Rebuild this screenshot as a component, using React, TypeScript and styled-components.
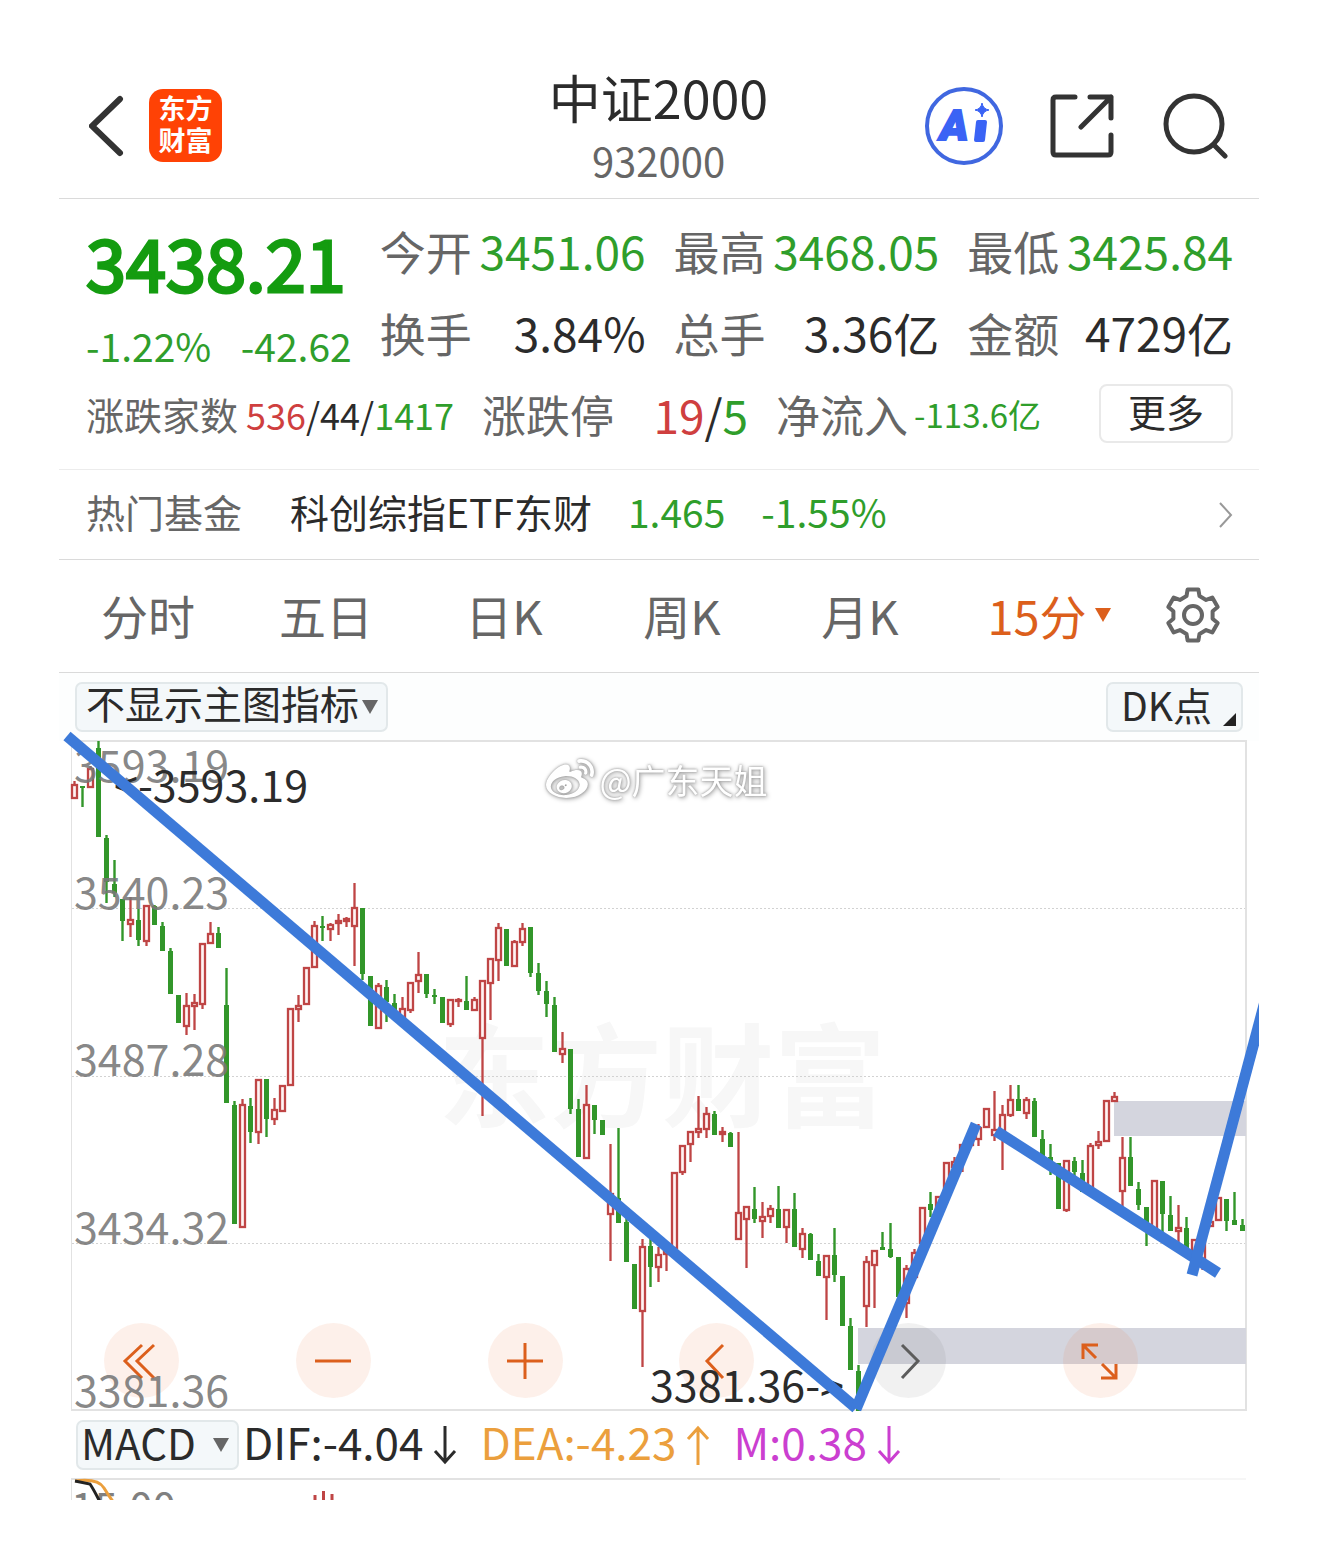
import React from "react";
import styled, { createGlobalStyle } from "styled-components";
import { FaWeibo } from "react-icons/fa";

const GlobalStyle = createGlobalStyle`
  *, *::before, *::after { box-sizing: border-box; }
  body {
    margin: 0;
    background: #fff;
    color: #2b2b2b;
    font-family: "Noto Sans CJK SC", "Noto Sans", sans-serif;
    font-weight: 400;
  }
  button, select { font: inherit; color: inherit; }
`;

const color = {
  ink: "#2b2b2b",
  label: "#666",
  green: "#2f9e2b",
  strongGreen: "#149c10",
  red: "#cf3f3f",
  orange: "#dc5f1c",
  gold: "#eb9f3d",
  purple: "#cb3fd0",
  line: "#dadada",
  trend: "#3d7ad9",
  candleUp: "#bf4545",
  candleDown: "#32962a",
  zone: "#d4d5de",
};

type Tone = "ink" | "green" | "red" | "gold" | "purple";

const Page = styled.div`
  padding: 59px;
`;

const Panel = styled.main`
  overflow: hidden;
`;

/* ---------- header ---------- */

const Header = styled.header`
  display: grid;
  grid-template-columns: 1fr auto 1fr;
  align-items: center;
  height: 140px;
  padding: 0 31px 6px 30px;
  border-bottom: 1px solid ${color.line};
`;

const HeaderSide = styled.div<{ $end?: boolean; $gap: number }>`
  display: flex;
  align-items: center;
  justify-content: ${(p) => (p.$end ? "flex-end" : "flex-start")};
  gap: ${(p) => p.$gap}px;
`;

const IconButton = styled.button`
  display: block;
  padding: 0;
  border: 0;
  background: none;
  cursor: pointer;
  svg { display: block; }
`;

const Logo = styled.div`
  display: flex;
  flex-direction: column;
  align-items: center;
  width: 73px;
  height: 73px;
  padding-top: 3px;
  border-radius: 14px;
  background: #ff4205;
  color: #fff;
  font-size: 27px;
  font-weight: 700;
  line-height: 32px;
`;

const TitleBlock = styled.div`
  padding-top: 3px;
  text-align: center;
`;

const Title = styled.h1`
  margin: 0 0 3px;
  font-size: 52px;
  font-weight: 400;
  line-height: 62px;
`;

const Code = styled.div`
  color: ${color.label};
  font-size: 40px;
  line-height: 58px;
`;

/* ---------- quote ---------- */

const Quote = styled.section`
  padding: 23px 26px 26px 27px;
  border-bottom: 1px solid #ececec;
`;

const QuoteGrid = styled.div`
  display: grid;
  grid-template-columns: repeat(4, minmax(0, 1fr));
  grid-template-rows: 56px 56px;
  gap: 26px 28px;
`;

const Price = styled.div`
  grid-row: 1 / 3;
  padding-top: 3px;
  white-space: nowrap;
`;

const Last = styled.strong`
  display: block;
  color: ${color.strongGreen};
  font-size: 72px;
  font-weight: 400;
  line-height: 72px;
  -webkit-text-stroke: 3px ${color.strongGreen};
`;

const Change = styled.div`
  display: flex;
  justify-content: space-between;
  margin-top: 24px;
  color: ${color.green};
  font-size: 39px;
  line-height: 48px;
`;

const Stat = styled.div`
  display: flex;
  align-items: baseline;
  justify-content: space-between;
  font-size: 46px;
  line-height: 56px;
  white-space: nowrap;
`;

const Breadth = styled(Stat)<{ $size: number; $width?: number; $gap?: number }>`
  align-items: center;
  gap: ${(p) => p.$gap ?? 0}px;
  width: ${(p) => (p.$width ? `${p.$width}px` : "auto")};
  font-size: ${(p) => p.$size}px;
`;

const Label = styled.span`
  color: ${color.label};
`;

const Value = styled.span<{ $tone?: Tone; $size?: number }>`
  color: ${(p) => color[p.$tone ?? "ink"]};
  ${(p) => (p.$size ? `font-size: ${p.$size}px;` : "")}
`;

const BreadthRow = styled.div`
  display: flex;
  align-items: center;
  gap: 28px;
  margin-top: 24px;
`;

const MoreButton = styled.button`
  width: 134px;
  height: 59px;
  margin-left: auto;
  padding: 0 0 6px;
  border: 2px solid #e9e9e9;
  border-radius: 8px;
  background: #fff;
  font-size: 38px;
  line-height: 48px;
  cursor: pointer;
`;

/* ---------- fund link ---------- */

const FundRow = styled.a`
  display: flex;
  align-items: center;
  gap: 36px;
  height: 90px;
  padding: 0 26px 0 27px;
  border-bottom: 1px solid ${color.line};
  color: ${color.ink};
  font-size: 39px;
  line-height: 56px;
  text-decoration: none;
  white-space: nowrap;
  > span { padding-bottom: 7px; }
`;

const FundLabel = styled(Label)`
  margin-right: 12px;
`;

const Chevron = styled.svg`
  margin-left: auto;
`;

/* ---------- period tabs ---------- */

const Tabs = styled.nav`
  display: grid;
  grid-template-columns: repeat(5, 178fr) 200fr 88fr;
  align-items: center;
  height: 113px;
  padding-right: 22px;
  border-bottom: 1px solid ${color.line};
`;

const Tab = styled.button<{ $active?: boolean }>`
  display: flex;
  align-items: center;
  justify-content: center;
  gap: 8px;
  padding: 0 0 2px;
  border: 0;
  background: none;
  color: ${(p) => (p.$active ? color.orange : color.label)};
  font-size: 47px;
  line-height: 64px;
  white-space: nowrap;
  cursor: pointer;
`;

/* ---------- chart ---------- */

const Toolbar = styled.div`
  display: flex;
  align-items: center;
  justify-content: space-between;
  height: 68px;
  padding: 0 16px;
  background: #fdfefe;
`;

const pill = `
  height: 50px;
  border: 2px solid #e2e8ea;
  border-radius: 7px;
  background: #f4f8fa;
  color: ${color.ink};
  cursor: pointer;
`;

const PillWrap = styled.label`
  ${pill}
  position: relative;
  display: block;
  svg {
    position: absolute;
    right: 8px;
    top: 16px;
    pointer-events: none;
  }
`;

const PillSelect = styled.select<{ $width: number; $size: number; $pad: number }>`
  appearance: none;
  display: block;
  width: ${(p) => p.$width}px;
  height: 58px;
  margin-top: -11px;
  padding: 0 0 0 ${(p) => p.$pad}px;
  border: 0;
  background: transparent;
  font-size: ${(p) => p.$size}px;
`;

const PillButton = styled.button`
  ${pill}
  display: flex;
  align-items: flex-end;
  gap: 11px;
  padding: 0 5px 4px 13px;
  font-size: 39px;
  line-height: 44px;
`;

const ChartArea = styled.div`
  position: relative;
`;

const ChartSvg = styled.svg<{ $clip?: boolean }>`
  display: block;
  width: 100%;
  overflow: ${(p) => (p.$clip ? "hidden" : "visible")};
`;

const OverlaySvg = styled(ChartSvg)`
  position: absolute;
  inset: 0;
  pointer-events: none;
`;

const Controls = styled.div`
  position: absolute;
  left: 0;
  right: 0;
  bottom: 13px;
  display: flex;
  justify-content: space-between;
  padding: 0 121px 0 45px;
`;

const RoundButton = styled.button<{ $muted?: boolean }>`
  width: 75px;
  height: 75px;
  padding: 0;
  border: 0;
  border-radius: 50%;
  background: ${(p) => (p.$muted ? "rgba(60, 60, 60, 0.07)" : "rgba(232, 110, 50, 0.1)")};
  color: ${(p) => (p.$muted ? "#5c5c5c" : color.orange)};
  cursor: pointer;
  svg { display: block; margin: 0 auto; }
`;

const Signature = styled.div`
  position: absolute;
  top: 14px;
  left: 0;
  right: 0;
  display: flex;
  align-items: center;
  justify-content: center;
  gap: 5px;
  padding-right: 4px;
  color: #fff;
  font-size: 34px;
  line-height: 50px;
  filter: drop-shadow(0 0 1px #999) drop-shadow(1px 1px 2px #aaa);
`;

const MacdBar = styled.div`
  display: flex;
  align-items: center;
  height: 67px;
  padding-left: 17px;
  white-space: nowrap;
`;

const Reading = styled.span<{ $tone: Tone }>`
  display: flex;
  align-items: center;
  gap: 10px;
  margin: 0 19px 0 4px;
  padding-bottom: 7px;
  color: ${(p) => color[p.$tone]};
  font-size: 44px;
  line-height: 56px;
  svg { margin-top: 7px; }
`;

/* Each bar: high, body top, body bottom, low, and whether it closed up. */
type Candle = [number, number, number, number, 0 | 1];

const candles: Candle[] = [
  [781, 784, 798, 799, 1], [786, 786, 788, 807, 0], [766, 768, 787, 787, 1], [741, 748, 837, 837, 0],
  [835, 838, 882, 903, 0], [860, 884, 893, 897, 0], [899, 899, 921, 941, 0], [897, 919, 924, 937, 1],
  [909, 920, 940, 946, 0], [905, 905, 941, 946, 1], [905, 906, 925, 925, 0], [922, 926, 951, 951, 0],
  [948, 951, 994, 994, 0], [995, 995, 1023, 1023, 0], [993, 1005, 1026, 1035, 1], [994, 1002, 1006, 1030, 1],
  [943, 943, 1004, 1009, 1], [922, 933, 943, 943, 1], [927, 933, 948, 948, 0], [968, 1005, 1103, 1103, 0],
  [1101, 1105, 1224, 1224, 0], [1099, 1104, 1227, 1227, 1], [1098, 1106, 1132, 1143, 0], [1079, 1079, 1132, 1144, 1],
  [1079, 1079, 1119, 1137, 0], [1098, 1109, 1119, 1125, 1], [1085, 1085, 1111, 1111, 1], [1008, 1008, 1085, 1085, 1],
  [995, 1005, 1009, 1022, 1], [967, 967, 1004, 1004, 1], [921, 925, 967, 967, 1], [916, 926, 928, 941, 0],
  [923, 924, 929, 941, 1], [914, 920, 923, 935, 1], [917, 918, 921, 927, 1], [883, 907, 926, 966, 1],
  [908, 908, 974, 980, 0], [976, 976, 1026, 1026, 0], [983, 985, 1028, 1028, 1], [980, 987, 1002, 1022, 0],
  [994, 1003, 1012, 1014, 0], [997, 1008, 1017, 1017, 1], [982, 982, 1010, 1013, 1], [952, 974, 981, 993, 1],
  [974, 974, 994, 998, 0], [989, 995, 997, 1004, 0], [997, 997, 1023, 1023, 0], [999, 999, 1024, 1027, 1],
  [998, 999, 1000, 1007, 1], [976, 1001, 1010, 1010, 0], [997, 999, 1010, 1010, 1], [980, 980, 1038, 1116, 1],
  [958, 958, 983, 1020, 1], [923, 927, 960, 981, 1], [929, 929, 966, 966, 0], [940, 941, 966, 966, 1],
  [923, 928, 942, 946, 1], [927, 927, 973, 977, 0], [963, 973, 991, 995, 0], [981, 991, 1004, 1017, 0],
  [997, 1005, 1052, 1052, 0], [1032, 1048, 1054, 1063, 1], [1049, 1049, 1109, 1114, 0], [1099, 1109, 1157, 1157, 0],
  [1085, 1104, 1158, 1158, 1], [1105, 1105, 1120, 1134, 0], [1120, 1120, 1135, 1135, 0], [1144, 1193, 1214, 1261, 1],
  [1128, 1198, 1223, 1223, 0], [1213, 1222, 1262, 1262, 0], [1264, 1264, 1309, 1309, 0], [1239, 1246, 1311, 1367, 1],
  [1239, 1246, 1267, 1287, 0], [1247, 1254, 1267, 1282, 1], [1243, 1247, 1254, 1271, 1], [1172, 1172, 1248, 1248, 1],
  [1145, 1145, 1172, 1175, 1], [1131, 1131, 1144, 1162, 1], [1096, 1128, 1132, 1138, 1], [1107, 1113, 1129, 1138, 1],
  [1111, 1114, 1135, 1135, 0], [1127, 1131, 1134, 1142, 1], [1132, 1133, 1147, 1147, 0], [1132, 1212, 1239, 1239, 1],
  [1206, 1206, 1219, 1268, 1], [1187, 1209, 1219, 1223, 0], [1202, 1216, 1221, 1238, 1], [1205, 1208, 1216, 1223, 1],
  [1186, 1209, 1228, 1228, 0], [1209, 1209, 1227, 1243, 1], [1193, 1209, 1247, 1247, 0], [1228, 1233, 1249, 1258, 1],
  [1233, 1234, 1260, 1260, 0], [1254, 1261, 1276, 1276, 0], [1255, 1255, 1277, 1320, 1], [1228, 1255, 1275, 1282, 0],
  [1276, 1276, 1326, 1326, 0], [1318, 1326, 1370, 1370, 0], [1365, 1371, 1411, 1411, 0], [1256, 1261, 1306, 1327, 1],
  [1250, 1250, 1265, 1308, 1], [1232, 1247, 1250, 1250, 0], [1223, 1249, 1257, 1258, 0], [1257, 1257, 1297, 1297, 0],
  [1265, 1268, 1303, 1318, 1], [1249, 1252, 1277, 1277, 1], [1207, 1207, 1243, 1243, 1], [1192, 1204, 1210, 1217, 0],
  [1196, 1196, 1213, 1213, 1], [1162, 1162, 1190, 1190, 1], [1157, 1161, 1167, 1167, 1], [1144, 1144, 1157, 1172, 1],
  [1135, 1135, 1145, 1145, 1], [1124, 1127, 1139, 1146, 1], [1108, 1108, 1127, 1127, 1], [1091, 1129, 1135, 1141, 1],
  [1105, 1114, 1133, 1170, 1], [1085, 1099, 1115, 1117, 1], [1085, 1099, 1111, 1111, 0], [1097, 1099, 1113, 1119, 1],
  [1098, 1101, 1137, 1137, 0], [1130, 1139, 1157, 1157, 0], [1144, 1157, 1167, 1175, 0], [1163, 1163, 1209, 1209, 0],
  [1160, 1160, 1210, 1212, 1], [1157, 1161, 1172, 1177, 0], [1160, 1173, 1192, 1192, 0], [1143, 1145, 1190, 1190, 1],
  [1131, 1141, 1145, 1149, 1], [1100, 1100, 1141, 1141, 1], [1092, 1096, 1101, 1101, 1], [1137, 1157, 1191, 1207, 1],
  [1137, 1157, 1186, 1186, 0], [1182, 1189, 1205, 1210, 0], [1207, 1207, 1227, 1246, 0], [1180, 1180, 1230, 1230, 1],
  [1181, 1181, 1214, 1233, 0], [1196, 1215, 1231, 1231, 0], [1205, 1227, 1231, 1243, 1], [1217, 1228, 1250, 1250, 0],
  [1239, 1239, 1253, 1253, 1], [1225, 1230, 1260, 1270, 1], [1218, 1221, 1226, 1226, 1], [1197, 1197, 1220, 1220, 1],
  [1199, 1199, 1221, 1231, 0], [1192, 1220, 1225, 1225, 0], [1219, 1225, 1231, 1231, 0],
];

const FIRST_X = 74.5;
const STEP = 8;
const CHART_VIEW = "59 741 1200 670";

const priceLabels = [
  { text: "3593.19", y: 782 },
  { text: "3540.23", y: 909 },
  { text: "3487.28", y: 1076 },
  { text: "3434.32", y: 1244 },
  { text: "3381.36", y: 1407 },
];

function CandleMark({ data, x }: { data: Candle; x: number }) {
  const [high, top, bottom, low, up] = data;
  if (up) {
    return (
      <g stroke={color.candleUp} strokeWidth={2.3} fill="none">
        <path d={`M${x} ${high}V${top}M${x} ${bottom}V${low}`} />
        <rect x={x - 2.5} y={top + 1} width={5} height={Math.max(bottom - top - 1, 1)} fill="#fff4f4" />
      </g>
    );
  }
  return (
    <g fill={color.candleDown}>
      <rect x={x - 1.2} y={high} width={2.4} height={low - high} />
      <rect x={x - 2.5} y={top} width={5} height={bottom - top} />
    </g>
  );
}

/* Six-toothed cog outline around the centre of a 60 unit box. */
function gearPath() {
  const corners: [number, number][] = [[20, -19], [26, -12], [26, 12], [20, 19]];
  const points: string[] = [];
  for (let tooth = 0; tooth < 6; tooth++) {
    for (const [radius, offset] of corners) {
      const angle = ((tooth * 60 - 90 + offset) * Math.PI) / 180;
      points.push(`${(30 + radius * Math.cos(angle)).toFixed(1)} ${(30 + radius * Math.sin(angle)).toFixed(1)}`);
    }
  }
  return `M${points.join("L")}Z`;
}

function Caret({ size = 16, fill = "#666" }: { size?: number; fill?: string }) {
  return (
    <svg width={size} height={size - 2} viewBox="0 0 16 14" aria-hidden="true">
      <path d="M0 0H16L8 14Z" fill={fill} />
    </svg>
  );
}

function Arrow({ up }: { up?: boolean }) {
  return (
    <svg width="24" height="40" viewBox="0 0 24 40" fill="none" stroke="currentColor" strokeWidth="3" aria-hidden="true">
      <path d={up ? "M12 40V3M2 14L12 3L22 14" : "M12 1V37M2 26L12 37L22 26"} />
    </svg>
  );
}

function ControlIcon({ d }: { d: string }) {
  return (
    <svg width="44" height="44" viewBox="0 0 44 44" fill="none" stroke="currentColor" strokeWidth="3" aria-hidden="true">
      <path d={d} />
    </svg>
  );
}

const controls = [
  { name: "最早", d: "M22 6L5 22L22 39M34 6L17 22L34 39" },
  { name: "缩小", d: "M4 22H40" },
  { name: "放大", d: "M4 22H40M22 4V40" },
  { name: "向左", d: "M28 6L12 22L28 39" },
  { name: "向右", d: "M15 6L31 22L15 39", muted: true },
  { name: "全屏", d: "M20 6H5V20M5 6L18 19M23 39H38V25M38 39L24 25" },
];

export default function App() {
  return (
    <Page>
      <GlobalStyle />
      <Panel>
        <Header>
          <HeaderSide $gap={25}>
            <IconButton aria-label="返回">
              <svg width="35" height="64" viewBox="0 0 35 64" fill="none" stroke="#333" strokeWidth="6" strokeLinecap="round">
                <path d="M31 5L3 32L31 59" />
              </svg>
            </IconButton>
            <Logo>
              <span>东方</span>
              <span>财富</span>
            </Logo>
          </HeaderSide>
          <TitleBlock>
            <Title>中证2000</Title>
            <Code>932000</Code>
          </TitleBlock>
          <HeaderSide $end $gap={46}>
            <IconButton aria-label="智能助手">
              <svg width="80" height="80" viewBox="0 0 80 80">
                <circle cx="40" cy="40" r="37" fill="#fff" stroke="#4067e0" strokeWidth="4" />
                <text x="16" y="54" fill="#3a63f5" stroke="#3a63f5" strokeWidth="2" fontFamily="Roboto, sans-serif" fontSize="43" fontWeight="900" fontStyle="italic">
                  A
                </text>
                <path d="M52 36Q52 34 54 34H61Q63 34 63 36L61 54Q61 56 59 56H52Q50 56 50 54Z" fill="#3a63f5" />
                <path d="M58 17Q59 23 65 24Q59 25 58 31Q57 25 51 24Q57 23 58 17Z" fill="#3a63f5" stroke="#3a63f5" />
              </svg>
            </IconButton>
            <IconButton aria-label="分享">
              <svg width="64" height="64" viewBox="0 0 64 64" fill="none" stroke="#333" strokeWidth="5" strokeLinecap="round" strokeLinejoin="round">
                <path d="M25 3H6Q3 3 3 6V58Q3 61 6 61H58Q61 61 61 58V41M40 3H61V24M61 3L31 33" />
              </svg>
            </IconButton>
            <IconButton aria-label="搜索">
              <svg width="68" height="68" viewBox="0 0 68 68" fill="none" stroke="#333" strokeWidth="5" strokeLinecap="round">
                <circle cx="34" cy="32" r="28" />
                <path d="M54 53L65 64" />
              </svg>
            </IconButton>
          </HeaderSide>
        </Header>

        <Quote>
          <QuoteGrid>
            <Price>
              <Last>3438.21</Last>
              <Change>
                <span>-1.22%</span>
                <span>-42.62</span>
              </Change>
            </Price>
            <Stat><Label>今开</Label><Value $tone="green">3451.06</Value></Stat>
            <Stat><Label>最高</Label><Value $tone="green">3468.05</Value></Stat>
            <Stat><Label>最低</Label><Value $tone="green">3425.84</Value></Stat>
            <Stat><Label>换手</Label><Value>3.84%</Value></Stat>
            <Stat><Label>总手</Label><Value>3.36亿</Value></Stat>
            <Stat><Label>金额</Label><Value>4729亿</Value></Stat>
          </QuoteGrid>
          <BreadthRow>
            <Breadth $size={38} $gap={8}>
              <Label>涨跌家数</Label>
              <Value $size={36}>
                <Value $tone="red">536</Value>/44/<Value $tone="green">1417</Value>
              </Value>
            </Breadth>
            <Breadth $size={44} $width={266}>
              <Label>涨跌停</Label>
              <Value $size={46}>
                <Value $tone="red">19</Value>/<Value $tone="green">5</Value>
              </Value>
            </Breadth>
            <Breadth $size={44} $gap={6}>
              <Label>净流入</Label>
              <Value $tone="green" $size={33}>-113.6亿</Value>
            </Breadth>
            <MoreButton>更多</MoreButton>
          </BreadthRow>
        </Quote>

        <FundRow href="#fund">
          <FundLabel>热门基金</FundLabel>
          <span>科创综指ETF东财</span>
          <Value $tone="green">1.465</Value>
          <Value $tone="green">-1.55%</Value>
          <Chevron width="14" height="28" viewBox="0 0 14 28" fill="none" stroke="#999" strokeWidth="2" aria-hidden="true">
            <path d="M1 2L12 14L1 26" />
          </Chevron>
        </FundRow>

        <Tabs>
          <Tab>分时</Tab>
          <Tab>五日</Tab>
          <Tab>日K</Tab>
          <Tab>周K</Tab>
          <Tab>月K</Tab>
          <Tab $active>
            15分
            <Caret fill={color.orange} />
          </Tab>
          <Tab aria-label="设置">
            <svg width="60" height="60" viewBox="0 0 60 60" fill="none" stroke="#666" strokeWidth="4" strokeLinejoin="round">
              <path d={gearPath()} />
              <circle cx="30" cy="30" r="9" />
            </svg>
          </Tab>
        </Tabs>

        <Toolbar>
          <PillWrap>
            <PillSelect $width={309} $size={39} $pad={9} aria-label="主图指标">
              <option>不显示主图指标</option>
            </PillSelect>
            <Caret />
          </PillWrap>
          <PillButton>
            DK点
            <svg width="13" height="13" viewBox="0 0 13 13" aria-hidden="true">
              <path d="M13 0V13H0Z" fill="#222" />
            </svg>
          </PillButton>
        </Toolbar>

        <ChartArea>
          <ChartSvg viewBox={CHART_VIEW} role="img" aria-label="15分钟K线图">
            <text x="438" y="1119" fontSize="112" fontWeight="700" fill="#f7f7f7">东方财富</text>
            <g stroke="#d2d2d2" strokeWidth="1" strokeDasharray="2 2">
              <path d="M72 908.5H1246M72 1076.5H1246M72 1243.5H1246" />
            </g>
            <path d="M71.5 741V1410" stroke="#e2e2e2" />
            <path d="M71 741H1246V1410H71" fill="none" stroke="#e2e2e2" strokeWidth="2" />
            <rect x="1114" y="1101" width="132" height="35" fill={color.zone} />
            <rect x="858" y="1328" width="388" height="36" fill={color.zone} />
            {candles.map((c, i) => (
              <CandleMark key={i} data={c} x={FIRST_X + STEP * i} />
            ))}
          </ChartSvg>

          <Controls>
            {controls.map((c) => (
              <RoundButton key={c.name} aria-label={c.name} $muted={c.muted}>
                <ControlIcon d={c.d} />
              </RoundButton>
            ))}
          </Controls>

          <OverlaySvg viewBox={CHART_VIEW}>
            <g fontSize="43" fill="#777" fillOpacity="0.88">
              {priceLabels.map((l) => (
                <text key={l.text} x="74" y={l.y}>{l.text}</text>
              ))}
            </g>
            <g fontSize="43" fill={color.ink}>
              <text x="308" y="802" textAnchor="end">{"<-3593.19"}</text>
              <text x="650" y="1402">{"3381.36->"}</text>
            </g>
            <g stroke={color.trend} strokeWidth="11">
              <path d="M67 736L856 1408" />
              <path d="M856 1409L976 1124" />
              <path d="M996 1131L1218 1273" />
              <path d="M1192 1275L1275 964" />
            </g>
          </OverlaySvg>

          <Signature>
            <FaWeibo size={48} />
            <span>@广东天姐</span>
          </Signature>
        </ChartArea>

        <MacdBar>
          <PillWrap>
            <PillSelect $width={159} $size={42} $pad={3} aria-label="副图指标">
              <option>MACD</option>
            </PillSelect>
            <Caret />
          </PillWrap>
          <Reading $tone="ink">DIF:-4.04<Arrow /></Reading>
          <Reading $tone="gold">DEA:-4.23<Arrow up /></Reading>
          <Reading $tone="purple">M:0.38<Arrow /></Reading>
        </MacdBar>

        <ChartSvg $clip viewBox="59 1478 1200 22" role="img" aria-label="MACD副图">
          <path d="M71.5 1479V1500" stroke="#e2e2e2" />
          <path d="M71 1479H1000" stroke="#e2e2e2" strokeWidth="2" />
          <path d="M1000 1479H1246" stroke="#f6f6f6" strokeWidth="2" />
          <text x="71" y="1523" fontSize="42" fill="#808080">15.00</text>
          <path d="M75 1481Q98 1478 104 1488T115 1504" fill="none" stroke={color.gold} strokeWidth="3" />
          <path d="M75 1481L90 1484Q94 1490 101 1504" fill="none" stroke="#222" strokeWidth="3" />
          <path d="M315 1495V1500M323.5 1491V1500M332 1494V1500" stroke={color.candleUp} strokeWidth="3" />
        </ChartSvg>
      </Panel>
    </Page>
  );
}
